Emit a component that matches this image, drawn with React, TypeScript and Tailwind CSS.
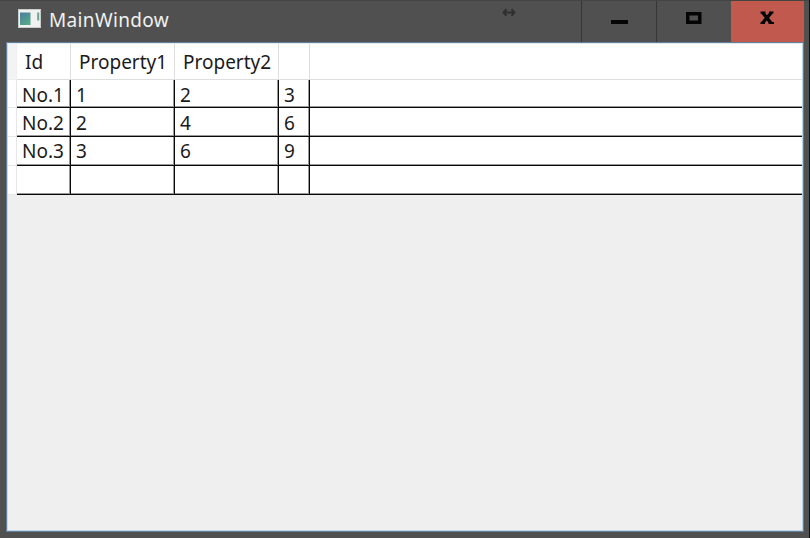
const columns = [
  { title: 'Id', width: 'w-[54px]', head: 'pl-2' },
  { title: 'Property1', width: 'w-[104px]', head: 'pl-2' },
  { title: 'Property2', width: 'w-[104px]', head: 'pl-2' },
  { title: '', width: 'w-[31px]', head: '' },
];

const rows = [
  { height: 'h-[28px]', leading: 'leading-[30px]', cells: ['No.1', '1', '2', '3'] },
  { height: 'h-[29px]', leading: 'leading-[31px]', cells: ['No.2', '2', '4', '6'] },
  { height: 'h-[29px]', leading: 'leading-[28px]', cells: ['No.3', '3', '6', '9'] },
  { height: 'h-[29px]', leading: 'leading-[28px]', cells: ['', '', '', ''] },
];

function TitleBar() {
  return (
    <header className="flex h-[42px] border-t border-[#444444] pl-[18px] pr-[5px]">
      <svg className="mt-2 h-[19px] w-[23px] shrink-0" viewBox="0 0 23 19">
        <defs>
          <linearGradient id="pane" x1="0" y1="0" x2="0.6" y2="1">
            <stop offset="0" stopColor="#4c7ba0" />
            <stop offset="1" stopColor="#55a888" />
          </linearGradient>
        </defs>
        <rect x="0.5" y="0.5" width="22" height="18" fill="#f1f1f1" stroke="#c9cccd" />
        <rect x="2" y="3.5" width="10.5" height="12.5" fill="url(#pane)" />
        <rect x="19.2" y="3.5" width="2" height="8" fill="#6aa394" />
      </svg>
      <h1 className="ml-2 mt-[6px] w-[453px] text-[19px] leading-[26px] tracking-[0.35px] text-[#f1f1f1]">MainWindow</h1>
      <svg className="mt-[7px] h-[9px] w-[14px] shrink-0" viewBox="0 0 14 9" fill="none" stroke="#303030" strokeWidth="2">
        <path d="M1.5 4.5H12.5M4.5 1.3L1.5 4.5L4.5 7.7M9.5 1.3L12.5 4.5L9.5 7.7" />
      </svg>
      <div className="ml-auto flex h-[41px]">
        <button aria-label="Minimize" className="w-[75px] border-l border-[#363636]">
          <svg width="74" height="41" viewBox="0 0 74 41" fill="#050505"><rect x="29" y="19" width="17" height="4" /></svg>
        </button>
        <button aria-label="Maximize" className="w-[75px] border-l border-[#363636]">
          <svg width="74" height="41" viewBox="0 0 74 41" fill="none" stroke="#050505" strokeWidth="3.5"><rect x="30.75" y="12.75" width="12" height="8.5" /></svg>
        </button>
        <button aria-label="Close" className="w-[73px] bg-[#c2594e]">
          <svg width="73" height="41" viewBox="0 0 73 41" fill="none" stroke="#050505">
            <path d="M31.5 11.5L40 22M40.5 11.5L31.5 22" strokeWidth="3.4" />
            <path d="M29.5 11.5H34.5M38 11.5H42.5M29.5 22H34M37.5 22H43" strokeWidth="2" />
          </svg>
        </button>
      </div>
    </header>
  );
}

function DataGrid() {
  return (
    <div className="text-[19px] text-[#1b1b1b]">
      <div className="flex h-[36px] bg-white">
        <div className="w-[9px] border-r border-b border-[#f0f0f0] bg-[#f3f3f3]" />
        {columns.map((c, i) => (
          <div key={i} className={`${c.width} ${c.head} border-r border-b border-[#dedede] pt-[5px] leading-[26px]`}>{c.title}</div>
        ))}
        <div className="flex-1 border-b border-[#dedede]" />
      </div>
      {rows.map((row, r) => (
        <div key={r} className={`flex bg-white ${row.height}`}>
          <div className="w-[9px] border-r border-b border-[#e7e7e7]" />
          {row.cells.map((cell, i) => (
            <div key={i} className={`${columns[i].width} ${row.leading} border-r border-b border-[#080808] pl-[5px] shadow-[inset_-1px_-1px_0_#00000066]`}>{cell}</div>
          ))}
          <div className="flex-1 border-b border-[#080808] shadow-[inset_0_-1px_0_#00000066]" />
        </div>
      ))}
    </div>
  );
}

export default function App() {
  return (
    <div className="flex h-[538px] w-[810px] flex-col overflow-hidden border-r border-[#111111] bg-[#505050] font-['Noto_Sans','Open_Sans',sans-serif]">
      <TitleBar />
      <main className="mb-[6px] ml-[6px] mr-[5px] flex-1 border border-[#627e9d] bg-[#efefef]">
        <div className="h-full border border-b-[#bfd5e6] border-l-[#c9d8e4] border-r-[#b8d5e8] border-t-[#e1e8ee]">
          <DataGrid />
        </div>
      </main>
    </div>
  );
}
